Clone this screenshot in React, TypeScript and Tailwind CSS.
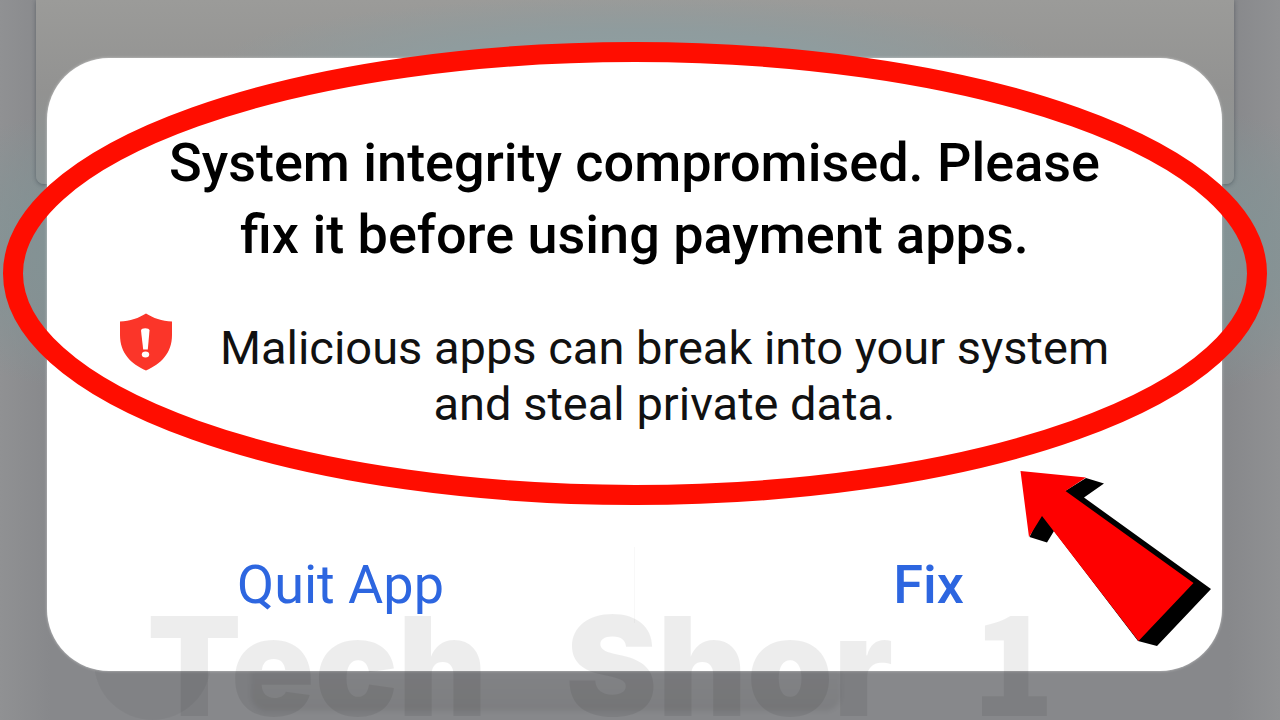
function BackdropPanel() {
  return (
    <div className="absolute inset-x-0 top-0 pl-[36px] pr-[46px]">
      <div className="h-[184px] rounded-b-lg bg-[radial-gradient(ellipse_420px_70px_at_50%_66px,#8e9fa2_0%,#8f9c9e_50%,transparent_100%),linear-gradient(to_bottom,#9b9b99_0%,#929291_50%,#8b9495_100%)] shadow-[0_1px_4px_rgba(40,50,60,0.45)]" />
    </div>
  );
}

function BackdropDock() {
  return (
    <div className="absolute inset-x-0 bottom-0 flex h-[60px] items-start pl-[94px]">
      <div className="h-[60px] w-[117px] rounded-b-full bg-black/4" />
      <div className="ml-10 h-[51px] w-[590px] rounded-b-2xl bg-gradient-to-b from-black/3 to-black/7 blur-[2px]" />
    </div>
  );
}

function ShieldIcon() {
  return (
    <svg className="h-[58px] w-[54px] shrink-0" viewBox="0 0 54 58" aria-hidden="true">
      <path
        d="M27 0.5C20 5 11 8 1 8.500V22C1 40 12 51 27 57.500C42 51 53 40 53 22V8.500C43 8 34 5 27 0.500Z"
        fill="#fb3529"
      />
      <path d="M22 17.500C22 14.500 30.500 14.500 30.500 17.500L28.800 36.500H24.200Z" fill="#fff" />
      <ellipse cx="26.500" cy="41.500" rx="3.700" ry="3" fill="#fff" />
    </svg>
  );
}

function Watermark() {
  return (
    <div className="pointer-events-none absolute inset-x-0 bottom-0 flex h-[116px] items-baseline gap-[78px] pl-[147px] font-['Inter',sans-serif] text-[138px] leading-[104px] font-black whitespace-nowrap text-black/7">
      <span>Tech</span>
      <span>Shor</span>
      <span className="font-['Noto_Sans_CJK_SC',sans-serif]">1</span>
    </div>
  );
}

function Annotations() {
  return (
    <svg
      className="pointer-events-none absolute inset-0 h-full w-full"
      viewBox="0 0 1280 720"
      aria-hidden="true"
    >
      <ellipse cx="635" cy="273.5" rx="622" ry="221.5" fill="none" stroke="#ff0d00" strokeWidth="20" />
      <path
        d="M1029.500 537L1047 542.500L1054 531L1138 641L1157 646L1211 589L1084 497.500L1104 483.500L1086 478L1065 491L1040 515Z"
        fill="#000"
      />
      <path d="M1020.500 471L1086 477.500L1065.500 491L1193.500 583L1138.500 641L1042 516L1029 537Z" fill="#fe0000" />
    </svg>
  );
}

export default function App() {
  return (
    <main className="relative min-h-screen overflow-hidden bg-[radial-gradient(ellipse_64%_200px_at_50%_250px,#819293_0%,#839395_70%,transparent_100%),linear-gradient(to_right,#909193,#87888b_4%,#87888b_96%,#909193)] font-['Roboto','Liberation_Sans',sans-serif]">
      <BackdropPanel />
      <BackdropDock />

      <div className="relative pt-[58px] pr-[58px] pl-[47px]">
        <section
          role="alertdialog"
          aria-labelledby="dialog-title"
          aria-describedby="dialog-message"
          className="rounded-[62px] bg-white pt-[69px] pb-[48px] shadow-[0_0_3px_rgba(255,255,255,0.5)]"
        >
          <h1 id="dialog-title" className="text-center text-[54px] leading-[72px] font-medium text-black">
            System integrity compromised. Please
            <br />
            fix it before using payment apps.
          </h1>

          <div className="mt-[38px] flex items-start pr-[98px] pl-[72px]">
            <div className="pt-1">
              <ShieldIcon />
            </div>
            <p id="dialog-message" className="flex-1 pt-[11px] pl-8 text-center text-[47px] leading-[56px] text-[#111]">
              Malicious apps can break into your system
              <br />
              and steal private data.
            </p>
          </div>

          <div className="mt-[115px] flex h-[76px]">
            <button type="button" className="flex-1 border-r border-[#f8f8f8] text-[54px] leading-[76px] text-[#2d66e0]">
              Quit App
            </button>
            <button type="button" className="flex-1 text-[54px] leading-[76px] font-medium text-[#2d66e0]">
              Fix
            </button>
          </div>
        </section>
      </div>

      <Watermark />
      <Annotations />
    </main>
  );
}
